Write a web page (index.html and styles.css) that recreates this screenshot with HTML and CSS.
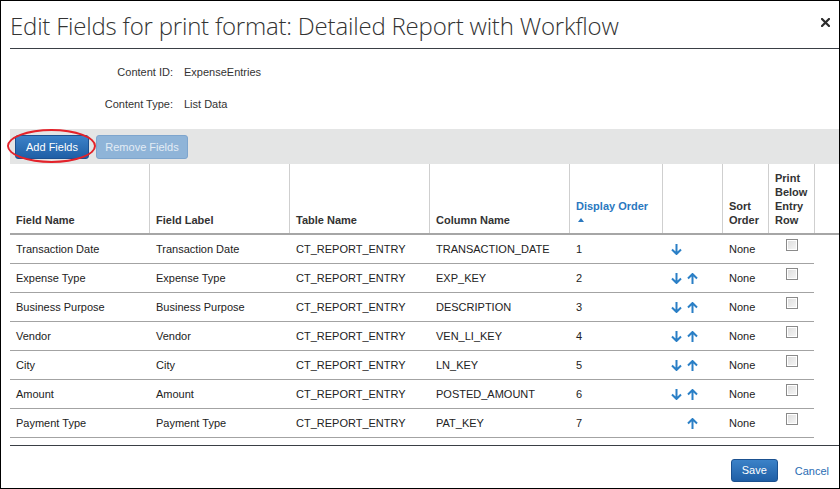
FILE: index.html
```html
<!DOCTYPE html>
<html>
<head>
<meta charset="utf-8">
<link rel="stylesheet" href="styles.css">
</head>
<body>
<div class="dialog">
  <div class="title-bar">
    <h1 class="title">Edit Fields for print format: Detailed Report with Workflow</h1>
    <span class="close"><svg width="9" height="9" viewBox="0 0 9 9"><path d="M1 1 L8 8 M8 1 L1 8" stroke="#2b2b2b" stroke-width="2.2" stroke-linecap="square"/></svg></span>
  </div>

  <div class="info">
    <span class="info-label">Content ID:</span><span class="info-value">ExpenseEntries</span>
    <span class="info-label">Content Type:</span><span class="info-value">List Data</span>
  </div>

  <div class="toolbar">
    <button class="btn btn-primary btn-add">Add Fields</button>
    <button class="btn btn-disabled btn-remove">Remove Fields</button>
    <span class="highlight"></span>
  </div>

  <div class="grid-head">
    <div class="th">Field Name</div>
    <div class="th">Field Label</div>
    <div class="th">Table Name</div>
    <div class="th">Column Name</div>
    <div class="th sorted">Display Order<br><span class="sort-up"></span></div>
    <div class="th"></div>
    <div class="th">Sort<br>Order</div>
    <div class="th">Print<br>Below<br>Entry<br>Row</div>
    <div class="th spacer"></div>
  </div>

  <div class="grid-body">
    <div class="tr">
      <div class="td">Transaction Date</div><div class="td">Transaction Date</div><div class="td">CT_REPORT_ENTRY</div><div class="td">TRANSACTION_DATE</div><div class="td">1</div>
      <div class="td arrows"><span class="arrow down"><svg viewBox="0 0 11 11"><path d="M5.5 0 V10 M1 5.5 L5.5 10 L10 5.5"/></svg></span><span class="arrow"></span></div>
      <div class="td">None</div><div class="td check"><span class="checkbox"></span></div>
    </div>
    <div class="tr">
      <div class="td">Expense Type</div><div class="td">Expense Type</div><div class="td">CT_REPORT_ENTRY</div><div class="td">EXP_KEY</div><div class="td">2</div>
      <div class="td arrows"><span class="arrow down"><svg viewBox="0 0 11 11"><path d="M5.5 0 V10 M1 5.5 L5.5 10 L10 5.5"/></svg></span><span class="arrow up"><svg viewBox="0 0 11 11"><path d="M5.5 11 V1 M1 5.5 L5.5 1 L10 5.5"/></svg></span></div>
      <div class="td">None</div><div class="td check"><span class="checkbox"></span></div>
    </div>
    <div class="tr">
      <div class="td">Business Purpose</div><div class="td">Business Purpose</div><div class="td">CT_REPORT_ENTRY</div><div class="td">DESCRIPTION</div><div class="td">3</div>
      <div class="td arrows"><span class="arrow down"><svg viewBox="0 0 11 11"><path d="M5.5 0 V10 M1 5.5 L5.5 10 L10 5.5"/></svg></span><span class="arrow up"><svg viewBox="0 0 11 11"><path d="M5.5 11 V1 M1 5.5 L5.5 1 L10 5.5"/></svg></span></div>
      <div class="td">None</div><div class="td check"><span class="checkbox"></span></div>
    </div>
    <div class="tr">
      <div class="td">Vendor</div><div class="td">Vendor</div><div class="td">CT_REPORT_ENTRY</div><div class="td">VEN_LI_KEY</div><div class="td">4</div>
      <div class="td arrows"><span class="arrow down"><svg viewBox="0 0 11 11"><path d="M5.5 0 V10 M1 5.5 L5.5 10 L10 5.5"/></svg></span><span class="arrow up"><svg viewBox="0 0 11 11"><path d="M5.5 11 V1 M1 5.5 L5.5 1 L10 5.5"/></svg></span></div>
      <div class="td">None</div><div class="td check"><span class="checkbox"></span></div>
    </div>
    <div class="tr">
      <div class="td">City</div><div class="td">City</div><div class="td">CT_REPORT_ENTRY</div><div class="td">LN_KEY</div><div class="td">5</div>
      <div class="td arrows"><span class="arrow down"><svg viewBox="0 0 11 11"><path d="M5.5 0 V10 M1 5.5 L5.5 10 L10 5.5"/></svg></span><span class="arrow up"><svg viewBox="0 0 11 11"><path d="M5.5 11 V1 M1 5.5 L5.5 1 L10 5.5"/></svg></span></div>
      <div class="td">None</div><div class="td check"><span class="checkbox"></span></div>
    </div>
    <div class="tr">
      <div class="td">Amount</div><div class="td">Amount</div><div class="td">CT_REPORT_ENTRY</div><div class="td">POSTED_AMOUNT</div><div class="td">6</div>
      <div class="td arrows"><span class="arrow down"><svg viewBox="0 0 11 11"><path d="M5.5 0 V10 M1 5.5 L5.5 10 L10 5.5"/></svg></span><span class="arrow up"><svg viewBox="0 0 11 11"><path d="M5.5 11 V1 M1 5.5 L5.5 1 L10 5.5"/></svg></span></div>
      <div class="td">None</div><div class="td check"><span class="checkbox"></span></div>
    </div>
    <div class="tr">
      <div class="td">Payment Type</div><div class="td">Payment Type</div><div class="td">CT_REPORT_ENTRY</div><div class="td">PAT_KEY</div><div class="td">7</div>
      <div class="td arrows"><span class="arrow"></span><span class="arrow up"><svg viewBox="0 0 11 11"><path d="M5.5 11 V1 M1 5.5 L5.5 1 L10 5.5"/></svg></span></div>
      <div class="td">None</div><div class="td check"><span class="checkbox"></span></div>
    </div>
  </div>

  <div class="footer">
    <button class="btn btn-primary btn-save">Save</button>
    <a class="cancel">Cancel</a>
  </div>
</div>
</body>
</html>
```

FILE: styles.css
```css
html, body {
  margin: 0;
  padding: 0;
  background: #fff;
}

.dialog {
  position: relative;
  width: 840px;
  height: 489px;
  box-sizing: border-box;
  border: 1px solid #000;
  padding: 0 0 0 9px;
  font-family: "Liberation Sans", Arial, sans-serif;
  font-size: 11px;
  color: #222;
  display: flex;
  flex-direction: column;
}

.title-bar {
  height: 48px;
  box-sizing: border-box;
  border-bottom: 1px solid #3a3f45;
  padding-top: 9px;
}

.title {
  margin: 0;
  font-family: "Open Sans", sans-serif;
  font-weight: 300;
  font-size: 24px;
  line-height: 32px;
  color: #333;
  letter-spacing: -0.2px;
}

.close {
  position: absolute;
  top: 17px;
  right: 9px;
  width: 9px;
  height: 9px;
  display: block;
}
.close svg { display: block; }

.info {
  display: grid;
  grid-template-columns: 163px auto;
  column-gap: 11px;
  row-gap: 18px;
  margin-top: 16px;
  line-height: 14px;
  color: #333;
}
.info-label { text-align: right; }

.toolbar {
  position: relative;
  margin-top: 18px;
  height: 35px;
  box-sizing: border-box;
  background: #e4e5e5;
  padding: 6px 0 0 5px;
  display: flex;
  align-items: flex-start;
  gap: 7px;
}

.btn {
  font-family: "Liberation Sans", Arial, sans-serif;
  font-size: 11px;
  height: 24px;
  box-sizing: border-box;
  border-radius: 3px;
  padding: 0;
  text-align: center;
  line-height: 22px;
}
.btn-primary {
  color: #fff;
  background: linear-gradient(#3c82c8, #1f5fa6);
  border: 1px solid #1b5190;
}
.btn-disabled {
  color: #e3ecf5;
  background: #8fb4d8;
  border: 1px solid #7ea5cd;
}
.btn-add { width: 74px; }
.btn-remove { width: 92px; }

.highlight {
  position: absolute;
  left: -3px;
  top: 0;
  width: 89px;
  height: 34px;
  box-sizing: border-box;
  border: 2px solid #e3222a;
  border-radius: 50%;
}

.grid-head {
  display: grid;
  grid-template-columns: 139px 140px 140px 140px 93px 60px 46px 46px 1fr;
  height: 71px;
  box-sizing: border-box;
  border-bottom: 2px solid #a6a6a6;
}
.th {
  font-weight: bold;
  color: #333;
  line-height: 14px;
  padding: 0 4px 6px 6px;
  display: flex;
  flex-direction: column;
  justify-content: flex-end;
  border-left: 1px solid #cfcfcf;
}
.th:first-child { border-left: none; }
.th.sorted { color: #2b78bf; }
.sort-up {
  display: inline-block;
  width: 0;
  height: 0;
  margin: 5px 0 5px 2px;
  border-left: 3px solid transparent;
  border-right: 3px solid transparent;
  border-bottom: 4px solid #2b78bf;
}

.grid-body {
  width: 804px;
}
.tr {
  display: grid;
  grid-template-columns: 139px 140px 140px 140px 93px 60px 46px 46px;
  height: 29px;
  box-sizing: border-box;
  border-bottom: 1px solid #a3a3a3;
}
.td {
  padding-left: 7px;
  display: flex;
  align-items: center;
  line-height: 14px;
  color: #222;
  white-space: nowrap;
}
.td:first-child { padding-left: 6px; }

.td.arrows {
  padding-left: 9px;
  gap: 5px;
}
.arrow {
  width: 11px;
  height: 11px;
  display: block;
}
.arrow svg {
  display: block;
  width: 11px;
  height: 11px;
  fill: none;
  stroke: #2a7fc6;
  stroke-width: 2;
}

.td.check {
  padding: 4px 0 0 0;
  align-items: flex-start;
  justify-content: center;
}
.checkbox {
  display: block;
  width: 12px;
  height: 12px;
  box-sizing: border-box;
  border: 1px solid #8a8a8a;
  background: linear-gradient(135deg, #dcdcdc, #f7f7f7);
  box-shadow: inset 0 0 0 1px #fff;
  margin-left: 1px;
}

.footer {
  margin-top: 7px;
  border-top: 1px solid #3a3f45;
  display: flex;
  justify-content: flex-end;
  align-items: center;
  padding: 13px 10px 0 0;
  gap: 17px;
}
.btn-save {
  width: 47px;
  height: 23px;
  line-height: 21px;
}
.cancel {
  color: #2a6cb3;
  line-height: 14px;
  cursor: pointer;
}
```
